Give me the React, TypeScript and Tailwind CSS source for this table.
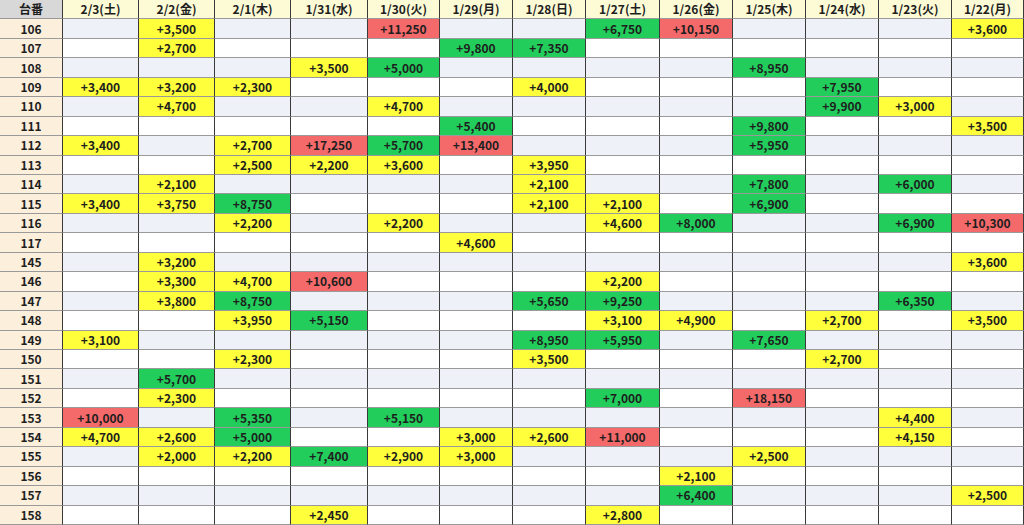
import React from 'react';

type Tone = 'y' | 'g' | 'r';
type Cell = { v: string; t: Tone } | null;

const DATES = [
  '2/3(土)', '2/2(金)', '2/1(木)', '1/31(水)', '1/30(火)', '1/29(月)', '1/28(日)',
  '1/27(土)', '1/26(金)', '1/25(木)', '1/24(水)', '1/23(火)', '1/22(月)',
];

// column index -> [value, tone]
const ROWS: [string, Record<number, [string, Tone]>][] = [
  ['106', { 1: ['+3,500', 'y'], 4: ['+11,250', 'r'], 7: ['+6,750', 'g'], 8: ['+10,150', 'r'], 12: ['+3,600', 'y'] }],
  ['107', { 1: ['+2,700', 'y'], 5: ['+9,800', 'g'], 6: ['+7,350', 'g'] }],
  ['108', { 3: ['+3,500', 'y'], 4: ['+5,000', 'g'], 9: ['+8,950', 'g'] }],
  ['109', { 0: ['+3,400', 'y'], 1: ['+3,200', 'y'], 2: ['+2,300', 'y'], 6: ['+4,000', 'y'], 10: ['+7,950', 'g'] }],
  ['110', { 1: ['+4,700', 'y'], 4: ['+4,700', 'y'], 10: ['+9,900', 'g'], 11: ['+3,000', 'y'] }],
  ['111', { 5: ['+5,400', 'g'], 9: ['+9,800', 'g'], 12: ['+3,500', 'y'] }],
  ['112', { 0: ['+3,400', 'y'], 2: ['+2,700', 'y'], 3: ['+17,250', 'r'], 4: ['+5,700', 'g'], 5: ['+13,400', 'r'], 9: ['+5,950', 'g'] }],
  ['113', { 2: ['+2,500', 'y'], 3: ['+2,200', 'y'], 4: ['+3,600', 'y'], 6: ['+3,950', 'y'] }],
  ['114', { 1: ['+2,100', 'y'], 6: ['+2,100', 'y'], 9: ['+7,800', 'g'], 11: ['+6,000', 'g'] }],
  ['115', { 0: ['+3,400', 'y'], 1: ['+3,750', 'y'], 2: ['+8,750', 'g'], 6: ['+2,100', 'y'], 7: ['+2,100', 'y'], 9: ['+6,900', 'g'] }],
  ['116', { 2: ['+2,200', 'y'], 4: ['+2,200', 'y'], 7: ['+4,600', 'y'], 8: ['+8,000', 'g'], 11: ['+6,900', 'g'], 12: ['+10,300', 'r'] }],
  ['117', { 5: ['+4,600', 'y'] }],
  ['145', { 1: ['+3,200', 'y'], 12: ['+3,600', 'y'] }],
  ['146', { 1: ['+3,300', 'y'], 2: ['+4,700', 'y'], 3: ['+10,600', 'r'], 7: ['+2,200', 'y'] }],
  ['147', { 1: ['+3,800', 'y'], 2: ['+8,750', 'g'], 6: ['+5,650', 'g'], 7: ['+9,250', 'g'], 11: ['+6,350', 'g'] }],
  ['148', { 2: ['+3,950', 'y'], 3: ['+5,150', 'g'], 7: ['+3,100', 'y'], 8: ['+4,900', 'y'], 10: ['+2,700', 'y'], 12: ['+3,500', 'y'] }],
  ['149', { 0: ['+3,100', 'y'], 6: ['+8,950', 'g'], 7: ['+5,950', 'g'], 9: ['+7,650', 'g'] }],
  ['150', { 2: ['+2,300', 'y'], 6: ['+3,500', 'y'], 10: ['+2,700', 'y'] }],
  ['151', { 1: ['+5,700', 'g'] }],
  ['152', { 1: ['+2,300', 'y'], 7: ['+7,000', 'g'], 9: ['+18,150', 'r'] }],
  ['153', { 0: ['+10,000', 'r'], 2: ['+5,350', 'g'], 4: ['+5,150', 'g'], 11: ['+4,400', 'y'] }],
  ['154', { 0: ['+4,700', 'y'], 1: ['+2,600', 'y'], 2: ['+5,000', 'g'], 5: ['+3,000', 'y'], 6: ['+2,600', 'y'], 7: ['+11,000', 'r'], 11: ['+4,150', 'y'] }],
  ['155', { 1: ['+2,000', 'y'], 2: ['+2,200', 'y'], 3: ['+7,400', 'g'], 4: ['+2,900', 'y'], 5: ['+3,000', 'y'], 9: ['+2,500', 'y'] }],
  ['156', { 8: ['+2,100', 'y'] }],
  ['157', { 8: ['+6,400', 'g'], 12: ['+2,500', 'y'] }],
  ['158', { 3: ['+2,450', 'y'], 7: ['+2,800', 'y'] }],
];

const toneClass: Record<Tone, string> = {
  y: 'bg-[#ffff3c]',
  g: 'bg-[#22cd5c]',
  r: 'bg-[#f46a6b]',
};

const cellBase =
  'flex items-center justify-center border-r border-b border-r-[#3a3a3a] border-b-[#9a9a9a] text-[12px] font-bold text-[#1e1e1e] leading-none';

export default function App() {
  return (
    <div
      className="grid h-[525px] w-[1024px] grid-cols-[63px_76px_76px_76px_77px_72px_73px_73px_74px_73px_73px_73px_73px_72px] grid-rows-[repeat(27,1fr)] bg-white"
      style={{ fontFamily: '"Noto Sans CJK JP", "Noto Sans", sans-serif' }}
    >
      <div className={`${cellBase} bg-[#d8d8d8] text-[11px]`}>台番</div>
      {DATES.map((d) => (
        <div key={d} className={`${cellBase} bg-[#fdfbd6] text-[11px]`}>
          {d}
        </div>
      ))}
      {ROWS.map(([num, vals], ri) => {
        const stripe = ri % 2 === 0 ? 'bg-[#eff1f9]' : 'bg-white';
        return (
          <React.Fragment key={num}>
            <div className={`${cellBase} bg-[#fcefdc]`}>{num}</div>
            {DATES.map((d, ci) => {
              const c: Cell = vals[ci] ? { v: vals[ci][0], t: vals[ci][1] } : null;
              return (
                <div key={d} className={`${cellBase} ${c ? toneClass[c.t] : stripe}`}>
                  {c ? c.v : ''}
                </div>
              );
            })}
          </React.Fragment>
        );
      })}
    </div>
  );
}
